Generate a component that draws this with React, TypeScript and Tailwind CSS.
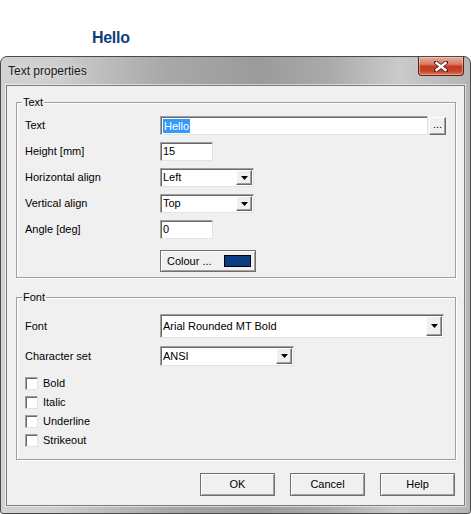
import React from 'react';

const ui = "font-['Liberation_Sans',Arial,sans-serif] text-[11px] text-black";

const sunken =
  'bg-white border border-t-[#a0a0a0] border-l-[#a0a0a0] border-r-[#e3e3e3] border-b-[#e3e3e3] shadow-[inset_1px_1px_0_#696969]';
const raised =
  'bg-[#f0f0f0] border border-t-white border-l-white border-r-[#696969] border-b-[#696969] shadow-[inset_-1px_-1px_0_#a0a0a0]';

const Arrow = () => (
  <svg width="7" height="4" viewBox="0 0 7 4">
    <path d="M0 0h7L3.5 4z" fill="#000" />
  </svg>
);

const Select: React.FC<{ value: string; w: string; h: string }> = ({ value, w, h }) => (
  <div className={`${sunken} ${w} ${h} flex items-stretch p-[1px]`}>
    <div className="flex-1 flex items-center pl-[1px] leading-none">{value}</div>
    <div className={`${raised} w-[16px] flex items-center justify-center`}>
      <Arrow />
    </div>
  </div>
);

const Input: React.FC<{ w: string; children?: React.ReactNode }> = ({ w, children }) => (
  <div className={`${sunken} ${w} h-[19px] flex items-center pl-[2px] leading-none`}>{children}</div>
);

const Group: React.FC<{ title: string; className: string; children: React.ReactNode }> = ({
  title,
  className,
  children
}) => (
  <div className={`relative border border-[#a0a0a0] shadow-[1px_1px_0_white,inset_1px_1px_0_white] ${className}`}>
    <span className="absolute top-[-7px] left-[5px] px-[1px] bg-[#f0f0f0] leading-[13px]">{title}</span>
    {children}
  </div>
);

const Row: React.FC<{ label: string; children: React.ReactNode }> = ({ label, children }) => (
  <div className="flex items-center">
    <div className="w-[135px] leading-none">{label}</div>
    {children}
  </div>
);

const Check: React.FC<{ label: string }> = ({ label }) => (
  <div className="flex items-center h-[13px] gap-[5px]">
    <div className={`${sunken} w-[13px] h-[13px]`} />
    <span className="leading-none">{label}</span>
  </div>
);

const Btn: React.FC<{ label: string }> = ({ label }) => (
  <div className="w-[75px] h-[23px] border border-[#707070] bg-[#f0f0f0] shadow-[inset_1px_1px_0_white,inset_-1px_-1px_0_#a0a0a0] flex items-center justify-center leading-none">
    {label}
  </div>
);

export default function App() {
  return (
    <div className={`w-[471px] h-[514px] bg-white overflow-hidden ${ui}`}>
      <div className="h-[56px] pt-[30px] pl-[92px]">
        <span className="font-['Liberation_Sans',Arial,sans-serif] font-bold text-[16px] leading-[16px] text-[#0f3f7a] tracking-[-0.3px]">
          Hello
        </span>
      </div>

      <div className="h-[458px] border border-[#4a4a4a] rounded-t-[7px] rounded-b-[3px] flex flex-col bg-[linear-gradient(90deg,#d2d2d2_0%,#cdcdcd_12%,#a8a8a8_35%,#9b9b9b_55%,#aaaaaa_70%,#cacaca_85%,#b4b4b4_100%)]">
        <div className="h-[28px] flex justify-between items-start">
          <div className="pl-[7px] pt-[7px] text-[12px] leading-[15px] text-[#1a1a1a] [text-shadow:0_0_6px_#ececec]">
            Text properties
          </div>
          <div className="mr-[6px] w-[46px] h-[19px] rounded-b-[4px] border border-t-0 border-[#5a231a] bg-[linear-gradient(180deg,#e9ab9b_0%,#d77a66_40%,#c23a20_52%,#c9472c_80%,#dc7a5c_100%)] shadow-[inset_0_0_0_1px_rgba(255,220,210,0.45)] flex items-center justify-center">
            <svg width="14" height="11" viewBox="0 0 14 11">
              <path d="M2 1.5L12 9.5M12 1.5L2 9.5" stroke="#4a1a12" strokeWidth="4" strokeLinecap="square" />
              <path d="M2.5 2L11.5 9M11.5 2L2.5 9" stroke="#ffffff" strokeWidth="2.4" strokeLinecap="square" />
            </svg>
          </div>
        </div>

        <div className="mx-[5px] h-[421px] border border-[#7c7c7c] shadow-[0_0_0_1px_rgba(255,255,255,0.55)] bg-[#f0f0f0] flex flex-col">
          <Group title="Text" className="mt-[16px] ml-[9px] mr-[8px] h-[176px]">
            <div className="pt-[13px] pl-[8px] flex flex-col">
              <div className="flex flex-col gap-[7px]">
                <Row label="Text">
                  <Input w="w-[268px]">
                    <span className="bg-[#3399ff] text-white px-[1px] leading-[14px]">Hello</span>
                  </Input>
                  <div className={`${raised} ml-[1px] w-[17px] h-[18px] flex items-end justify-center pb-[4px] leading-none`}>
                    ...
                  </div>
                </Row>
                <Row label="Height [mm]">
                  <Input w="w-[53px]">15</Input>
                </Row>
                <Row label="Horizontal align">
                  <Select value="Left" w="w-[94px]" h="h-[19px]" />
                </Row>
                <Row label="Vertical align">
                  <Select value="Top" w="w-[94px]" h="h-[19px]" />
                </Row>
                <Row label="Angle [deg]">
                  <Input w="w-[53px]">0</Input>
                </Row>
              </div>
              <div className="mt-[11px] ml-[135px]">
                <div className="w-[96px] h-[22px] border border-[#707070] bg-[#f0f0f0] shadow-[inset_1px_1px_0_white,inset_-1px_-1px_0_#a0a0a0] flex items-center justify-between pl-[6px] pr-[4px] leading-none">
                  <span>Colour ...</span>
                  <div className="w-[27px] h-[12px] border border-black bg-[#0a3e82]" />
                </div>
              </div>
            </div>
          </Group>

          <Group title="Font" className="mt-[19px] ml-[9px] mr-[8px] h-[163px]">
            <div className="pt-[16px] pl-[8px] flex flex-col">
              <Row label="Font">
                <Select value="Arial Rounded MT Bold" w="w-[284px]" h="h-[24px]" />
              </Row>
              <div className="mt-[8px]">
                <Row label="Character set">
                  <Select value="ANSI" w="w-[134px]" h="h-[20px]" />
                </Row>
              </div>
              <div className="mt-[11px] flex flex-col gap-[6px]">
                <Check label="Bold" />
                <Check label="Italic" />
                <Check label="Underline" />
                <Check label="Strikeout" />
              </div>
            </div>
          </Group>

          <div className="mt-[13px] mr-[9px] flex justify-end gap-[15px]">
            <Btn label="OK" />
            <Btn label="Cancel" />
            <Btn label="Help" />
          </div>
        </div>
      </div>
    </div>
  );
}
